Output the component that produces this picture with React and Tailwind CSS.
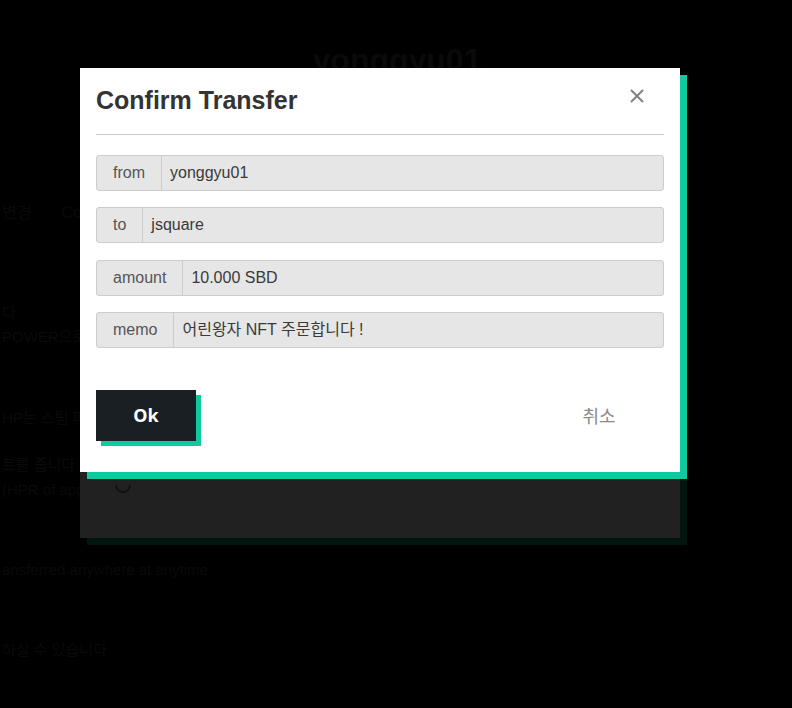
import React from "react";

function Field({ label, value, className = "" }) {
  return (
    <div className={`flex h-[36px] rounded-[3px] border border-[#cccccc] bg-[#e6e6e6] text-[16px] ${className}`}>
      <div className="flex items-center px-[16px] border-r border-[#cccccc] text-[#555555]">{label}</div>
      <div className="flex items-center pl-[8px] text-[#3a3a3a]">{value}</div>
    </div>
  );
}

export default function App() {
  return (
    <div className="relative w-[792px] h-[708px] bg-black overflow-hidden font-['Liberation_Sans','Noto_Sans_CJK_KR',sans-serif]">
      {/* dimmed page behind the backdrop */}
      <div className="text-[#0a0a0a] pl-[2px]">
        <div className="pt-[40px] text-center text-[32px] font-bold leading-[40px]">yonggyu01</div>
        <div className="mt-[123px] flex gap-[30px] text-[16px] leading-[20px]">
          <span>변경</span>
          <span>Co</span>
        </div>
        <div className="mt-[80px] text-[15px] leading-[20px]">다</div>
        <div className="mt-[4px] text-[15px] leading-[20px]">POWER으로</div>
        <div className="mt-[61px] text-[15px] leading-[20px]">HP는 스팀 파워</div>
        <div className="mt-[27px] text-[15px] leading-[20px]">트를 줍니다</div>
        <div className="mt-[5px] text-[15px] leading-[20px]">(HPR of app</div>
        <div className="mt-[60px] text-[15px] leading-[20px]">ansferred anywhere at anytime</div>
        <div className="mt-[60px] text-[15px] leading-[20px]">하실 수 있습니다</div>
      </div>

      {/* modal layer */}
      <div className="absolute inset-0 pl-[80px] pt-[68px]">
        <div className="w-[600px] flex flex-col">
          <div className="relative z-10 bg-white px-[16px] pb-[31px] shadow-[7px_7px_0_#0ecb9f]">
            <div className="pt-[17px] flex items-start justify-between">
              <h4 className="text-[25px] leading-[30px] font-bold text-[#333333]">Confirm Transfer</h4>
              <button className="mt-[4px] mr-[20px] w-[14px] h-[14px] flex items-center justify-center" aria-label="close">
                <svg width="14" height="14" viewBox="0 0 14 14">
                  <path d="M1 1 L13 13 M13 1 L1 13" stroke="#808080" strokeWidth="2" fill="none" />
                </svg>
              </button>
            </div>
            <div className="mt-[19px] border-t border-[#cccccc]" />
            <Field className="mt-[20px]" label="from" value="yonggyu01" />
            <Field className="mt-[16px]" label="to" value="jsquare" />
            <Field className="mt-[17px]" label="amount" value="10.000 SBD" />
            <Field className="mt-[16px]" label="memo" value="어린왕자 NFT 주문합니다 !" />
            <div className="mt-[42px] flex items-center justify-between">
              <button className="w-[100px] h-[51px] bg-[#1a1f24] text-white text-[18px] font-bold font-['Noto_Sans',sans-serif] shadow-[5px_5px_0_#0ecb9f]">
                Ok
              </button>
              <button className="w-[100px] mr-[15px] text-center text-[18px] text-[#8a8a8a] font-['Noto_Sans_CJK_KR',sans-serif]">
                취소
              </button>
            </div>
          </div>
          <div className="h-[66px] bg-[#212121] shadow-[7px_7px_0_#03150f] pl-[35px] pt-[5px]">
            <div className="w-[16px] h-[16px] rounded-full border-2 border-transparent border-b-[#111111] border-l-[#111111] -rotate-45" />
          </div>
        </div>
      </div>
    </div>
  );
}
